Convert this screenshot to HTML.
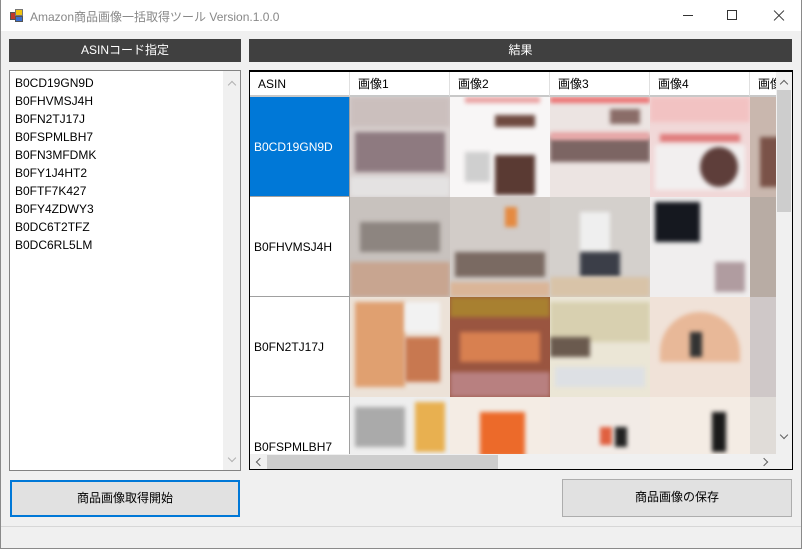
<!DOCTYPE html>
<html><head><meta charset="utf-8"><style>
*{margin:0;padding:0;box-sizing:border-box}
body{width:802px;height:549px;background:#f0f0f0;font-family:"Liberation Sans","Noto Sans CJK JP",sans-serif;font-size:12px;color:#000;position:relative;overflow:hidden}
.a{position:absolute}
.title{left:0;top:0;width:802px;height:31px;background:#fff}
.hdr{background:#404040;color:#fff;text-align:center;line-height:23px;font-size:12px}
.list{left:9px;top:70px;width:232px;height:401px;background:#fff;border:1px solid #828282}
.list div{height:18px;line-height:18px;padding-left:5px}
.grid{left:249px;top:70px;width:544px;height:400px;background:#fff;border:1px solid #000;border-top:2px solid #000;overflow:hidden}
.ch{height:25px;line-height:25px;border-right:1px solid #e0e0e0;border-bottom:2px solid #c8c8c8;padding-left:8px;background:#fff}
.rh{border-bottom:1px solid #a0a0a0;border-right:1px solid #a0a0a0;padding-left:4px;background:#fff}
.cell{overflow:hidden}
.cell i{position:absolute;display:block;filter:blur(2px)}
.btn{background:#e1e1e1;border:1px solid #adadad;text-align:center;line-height:34px;font-size:12px}
.chev{position:absolute;width:6px;height:6px;border-left:1.5px solid #606060;border-top:1.5px solid #606060}
</style></head><body>
<div class="a title"></div>
<div class="a" style="left:10px;top:9px;width:13px;height:13px">
<div class="a" style="left:0;top:3px;width:6px;height:8px;background:#c0392b;border:1px solid #555"></div>
<div class="a" style="left:5px;top:0;width:8px;height:7px;background:#f1c40f;border:1px solid #777"></div>
<div class="a" style="left:5px;top:7px;width:8px;height:6px;background:#3b6fd1;border:1px solid #555"></div>
</div>
<div class="a" style="left:30px;top:8px;color:#888;font-size:12px">Amazon商品画像一括取得ツール Version.1.0.0</div>
<div class="a" style="left:683px;top:15px;width:10px;height:1px;background:#333"></div>
<div class="a" style="left:727px;top:10px;width:10px;height:10px;border:1px solid #333"></div>
<div class="a" style="left:772px;top:15px;width:14px;height:1px;background:#333;transform:rotate(45deg)"></div>
<div class="a" style="left:772px;top:15px;width:14px;height:1px;background:#333;transform:rotate(-45deg)"></div>

<div class="a hdr" style="left:9px;top:39px;width:232px;height:23px">ASINコード指定</div>
<div class="a hdr" style="left:249px;top:39px;width:543px;height:23px">結果</div>

<div class="a list">
<div style="margin-top:3px">B0CD19GN9D</div><div>B0FHVMSJ4H</div><div>B0FN2TJ17J</div><div>B0FSPMLBH7</div><div>B0FN3MFDMK</div><div>B0FY1J4HT2</div><div>B0FTF7K427</div><div>B0FY4ZDWY3</div><div>B0DC6T2TFZ</div><div>B0DC6RL5LM</div>
<div class="a" style="left:213px;top:0;width:17px;height:399px;background:#f0f0f0;padding:0"></div>
<span class="chev" style="left:219px;top:11px;transform:rotate(45deg);border-color:#b0b0b0"></span>
<span class="chev" style="left:219px;top:384px;transform:rotate(225deg);border-color:#b0b0b0"></span>
</div>

<div class="a grid">
<div class="a ch" style="left:0;top:0;width:100px">ASIN</div>
<div class="a ch" style="left:100px;top:0;width:100px">画像1</div>
<div class="a ch" style="left:200px;top:0;width:100px">画像2</div>
<div class="a ch" style="left:300px;top:0;width:100px">画像3</div>
<div class="a ch" style="left:400px;top:0;width:100px">画像4</div>
<div class="a ch" style="left:500px;top:0;width:100px">画像5</div>

<div class="a rh" style="left:0;top:25px;width:100px;height:100px;background:#0078d7;color:#fff;line-height:100px">B0CD19GN9D</div>
<div class="a rh" style="left:0;top:125px;width:100px;height:100px;line-height:100px">B0FHVMSJ4H</div>
<div class="a rh" style="left:0;top:225px;width:100px;height:100px;line-height:100px">B0FN2TJ17J</div>
<div class="a rh" style="left:0;top:325px;width:100px;height:100px;line-height:100px">B0FSPMLBH7</div>

<div class="a cell" style="left:100px;top:25px;width:100px;height:100px;background:#d8d0cf">
<i style="left:0;top:0;width:100px;height:30px;background:#cbbfbd"></i>
<i style="left:5px;top:35px;width:90px;height:40px;background:#8e7a80"></i>
<i style="left:0;top:80px;width:100px;height:20px;background:#e4e2e2"></i></div>
<div class="a cell" style="left:200px;top:25px;width:100px;height:100px;background:#f8f6f6">
<i style="left:15px;top:0;width:75px;height:6px;background:#eaa0a0"></i>
<i style="left:45px;top:18px;width:40px;height:12px;background:#6e4a40"></i>
<i style="left:45px;top:58px;width:40px;height:40px;background:#5a3a33"></i>
<i style="left:15px;top:55px;width:25px;height:30px;background:#cfcfcf"></i></div>
<div class="a cell" style="left:300px;top:25px;width:100px;height:100px;background:#ece4e2">
<i style="left:0;top:0;width:100px;height:6px;background:#ec7070"></i>
<i style="left:0;top:40px;width:100px;height:25px;background:#7c6563"></i>
<i style="left:0;top:35px;width:100px;height:8px;background:#e8a8a8"></i>
<i style="left:60px;top:12px;width:30px;height:15px;background:#8a6d68"></i></div>
<div class="a cell" style="left:400px;top:25px;width:100px;height:100px;background:#f1d8d8">
<i style="left:0;top:0;width:100px;height:25px;background:#f2c2c2"></i>
<i style="left:10px;top:37px;width:80px;height:8px;background:#e07c7c"></i>
<i style="left:5px;top:48px;width:90px;height:45px;background:#f2efef"></i>
<i style="left:50px;top:50px;width:38px;height:40px;background:#5e3e3a;border-radius:50%"></i></div>
<div class="a cell" style="left:500px;top:25px;width:30px;height:100px;background:#c9b7ae">
<i style="left:10px;top:40px;width:20px;height:50px;background:#7a5248"></i></div>
<div class="a cell" style="left:100px;top:125px;width:100px;height:100px;background:#c8c2be">
<i style="left:10px;top:25px;width:80px;height:30px;background:#8d8580"></i>
<i style="left:0;top:65px;width:100px;height:35px;background:#c8a590"></i></div>
<div class="a cell" style="left:200px;top:125px;width:100px;height:100px;background:#d2ccc8">
<i style="left:55px;top:10px;width:12px;height:20px;background:#e58a40"></i>
<i style="left:5px;top:55px;width:90px;height:25px;background:#7a6a62"></i>
<i style="left:0;top:85px;width:100px;height:15px;background:#dab598"></i></div>
<div class="a cell" style="left:300px;top:125px;width:100px;height:100px;background:#d4d0cc">
<i style="left:30px;top:15px;width:30px;height:40px;background:#efefef"></i>
<i style="left:30px;top:55px;width:40px;height:25px;background:#3b3e48"></i>
<i style="left:0;top:80px;width:100px;height:20px;background:#d8c3a8"></i></div>
<div class="a cell" style="left:400px;top:125px;width:100px;height:100px;background:#f0eeee">
<i style="left:5px;top:5px;width:45px;height:40px;background:#15181f"></i>
<i style="left:65px;top:65px;width:30px;height:30px;background:#b09ca0"></i></div>
<div class="a cell" style="left:500px;top:125px;width:30px;height:100px;background:#b8aca4"></div>
<div class="a cell" style="left:100px;top:225px;width:100px;height:100px;background:#ece2d8">
<i style="left:5px;top:5px;width:50px;height:85px;background:#e0a070"></i>
<i style="left:55px;top:40px;width:35px;height:45px;background:#c87850"></i>
<i style="left:55px;top:5px;width:35px;height:30px;background:#f2f2f2"></i></div>
<div class="a cell" style="left:200px;top:225px;width:100px;height:100px;background:#9a5540">
<i style="left:0;top:0;width:100px;height:20px;background:#a88030"></i>
<i style="left:10px;top:35px;width:80px;height:30px;background:#d88050"></i>
<i style="left:0;top:75px;width:100px;height:25px;background:#b88080"></i></div>
<div class="a cell" style="left:300px;top:225px;width:100px;height:100px;background:#ebe6d6">
<i style="left:0;top:5px;width:100px;height:40px;background:#d8d0b0"></i>
<i style="left:0;top:40px;width:40px;height:20px;background:#6a5a4e"></i>
<i style="left:5px;top:70px;width:90px;height:20px;background:#dde0e4"></i></div>
<div class="a cell" style="left:400px;top:225px;width:100px;height:100px;background:#f0e2d8">
<i style="left:10px;top:15px;width:80px;height:50px;background:#e8b898;border-radius:40px 40px 0 0"></i>
<i style="left:40px;top:35px;width:12px;height:25px;background:#333"></i></div>
<div class="a cell" style="left:500px;top:225px;width:30px;height:100px;background:#cfc8c8"></div>
<div class="a cell" style="left:100px;top:325px;width:100px;height:60px;background:#eeeeee">
<i style="left:5px;top:10px;width:50px;height:40px;background:#aaaaaa"></i>
<i style="left:65px;top:5px;width:30px;height:50px;background:#e8b050"></i></div>
<div class="a cell" style="left:200px;top:325px;width:100px;height:60px;background:#f4ece4">
<i style="left:30px;top:15px;width:45px;height:45px;background:#ec6a2a"></i></div>
<div class="a cell" style="left:300px;top:325px;width:100px;height:60px;background:#f2ebe6">
<i style="left:50px;top:30px;width:12px;height:18px;background:#e06040"></i>
<i style="left:65px;top:30px;width:12px;height:20px;background:#222"></i></div>
<div class="a cell" style="left:400px;top:325px;width:100px;height:60px;background:#f4ece4">
<i style="left:62px;top:15px;width:14px;height:40px;background:#1a1a1a"></i></div>
<div class="a cell" style="left:500px;top:325px;width:30px;height:60px;background:#e0dcd8"></div>

<div class="a" style="left:526px;top:0;width:16px;height:398px;background:#f0f0f0"></div>
<div class="a" style="left:527px;top:18px;width:14px;height:122px;background:#cdcdcd"></div>
<span class="chev" style="left:531px;top:9px;transform:rotate(45deg)"></span>
<span class="chev" style="left:531px;top:360px;transform:rotate(225deg)"></span>
<div class="a" style="left:0;top:382px;width:526px;height:16px;background:#f0f0f0"></div>
<div class="a" style="left:17px;top:383px;width:231px;height:14px;background:#cdcdcd"></div>
<span class="chev" style="left:7px;top:387px;transform:rotate(-45deg)"></span>
<span class="chev" style="left:511px;top:387px;transform:rotate(135deg)"></span>
</div>

<div class="a btn" style="left:10px;top:480px;width:230px;height:37px;border:2px solid #0078d7;line-height:33px">商品画像取得開始</div>
<div class="a btn" style="left:562px;top:479px;width:230px;height:38px">商品画像の保存</div>
<div class="a" style="left:0;top:526px;width:802px;height:1px;background:#d7d7d7"></div>
<div class="a" style="left:0;top:548px;width:802px;height:1px;background:#8a8a8a"></div>
<div class="a" style="left:0;top:0;width:1px;height:549px;background:#8a8a8a"></div>
<div class="a" style="left:801px;top:0;width:1px;height:549px;background:#8a8a8a"></div>
</body></html>
